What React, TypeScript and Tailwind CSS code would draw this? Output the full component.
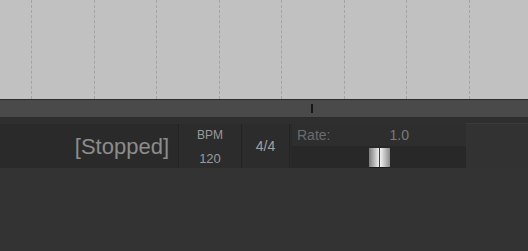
const gridCols = [0, 1, 2, 3, 4, 5, 6, 7];

function Timeline() {
  return (
    <div className="flex h-[99px] bg-[#c0c1c0] pl-[31px] overflow-hidden">
      {gridCols.map((i) => (
        <div key={i} className="w-[62.5px] shrink-0 border-l border-dashed border-[#a3a4a3]" />
      ))}
    </div>
  );
}

function Ruler() {
  return (
    <div className="border-t border-b border-[#2c2c2c] bg-[#4a4a4a]">
      <div className="flex h-[17px] items-center pl-[311px]">
        <div className="h-[9px] w-[2px] bg-[#161616]" />
      </div>
    </div>
  );
}

function RateSlider() {
  return (
    <div className="flex w-[174px] flex-col">
      <div className="flex h-[22px] items-end bg-[#2e2e2e] pl-[5px] text-[14px] leading-none text-[#6c6c6c]">
        <span className="pb-[4px]">Rate:</span>
        <span className="ml-[59px] pb-[4px] text-[#7a7a7a]">1.0</span>
      </div>
      <div className="flex h-[22px] items-end bg-[#282828] pl-[77px]">
        <div className="flex h-[20px] w-[21px] border-b border-[#1c1c1c]">
          <div className="w-[10px] bg-gradient-to-r from-[#7c7c7c] to-[#f0f0f0]" />
          <div className="w-px bg-[#3a3a3a]" />
          <div className="w-[10px] bg-gradient-to-r from-[#f4f4f4] to-[#8a8a8a]" />
        </div>
      </div>
    </div>
  );
}

function Transport() {
  return (
    <div className="flex h-[44px] bg-[#2a2a2a] text-[#9a9a9a]">
      <div className="flex w-[178px] items-center justify-end pr-[9px] text-[22px] text-[#8c8c8c]">
        [Stopped]
      </div>
      <div className="flex w-[64px] flex-col items-center border-x border-[#242424] bg-[#2c2c2c] pt-[4px] text-[12px] leading-none">
        <span className="mt-[1px]">BPM</span>
        <span className="mt-[11px] text-[13px]">120</span>
      </div>
      <div className="flex w-[48px] items-center justify-center border-r border-[#242424] bg-[#2c2c2c] text-[14px] text-[#a0a0a0]">
        4/4
      </div>
      <div className="w-[2px]" />
      <RateSlider />
      <div className="flex-1 border-t border-[#3a3a3a] bg-[#323232] mt-[-1px]" />
    </div>
  );
}

export default function App() {
  return (
    <div
      className="flex h-[251px] w-[528px] flex-col overflow-hidden bg-[#333333]"
      style={{ fontFamily: '"Liberation Sans", Arial, sans-serif' }}
    >
      <Timeline />
      <Ruler />
      <div className="h-[6px] bg-[#2f2f2f]" />
      <Transport />
    </div>
  );
}
